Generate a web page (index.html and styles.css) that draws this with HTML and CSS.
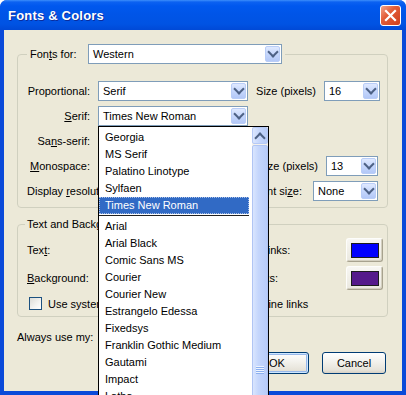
FILE: index.html
```html
<!DOCTYPE html>
<html lang="en">
<head>
    <meta charset="UTF-8">
    <title>Fonts &amp; Colors</title>
    <link rel="stylesheet" href="styles.css">
</head>
<body>
    <div class="window">
        <!-- Title bar -->
        <div class="titlebar">
            <span class="title">Fonts &amp; Colors</span>
            <button class="close-button" aria-label="Close">
                <svg width="19" height="19" viewBox="0 0 19 19"><path d="M5 5L14 14M14 5L5 14" stroke="#fff" stroke-width="2.2" stroke-linecap="square"/></svg>
            </button>
        </div>

        <div class="client">
            <!-- Fonts group -->
            <fieldset class="group group-fonts">
                <legend>
                    <div class="legend-inner">
                        <label class="legend-label">Fon<u>t</u>s for:</label>
                        <div class="combo combo-lang"><span class="combo-value">Western</span><span class="combo-arrow"></span></div>
                    </div>
                </legend>
                <div class="rows">
                    <div class="row">
                        <label class="row-label">Proportional:</label>
                        <div class="combo combo-face"><span class="combo-value">Serif</span><span class="combo-arrow"></span></div>
                        <div class="side">
                            <label>Size (pixels)</label>
                            <div class="combo combo-size"><span class="combo-value">16</span><span class="combo-arrow"></span></div>
                        </div>
                    </div>
                    <div class="row">
                        <label class="row-label"><u>S</u>erif:</label>
                        <div class="combo combo-face"><span class="combo-value">Times New Roman</span><span class="combo-arrow"></span></div>
                    </div>
                    <div class="row">
                        <label class="row-label">Sa<u>n</u>s-serif:</label>
                        <div class="combo combo-face"><span class="combo-value">Arial</span><span class="combo-arrow"></span></div>
                    </div>
                    <div class="row">
                        <label class="row-label"><u>M</u>onospace:</label>
                        <div class="combo combo-face"><span class="combo-value">Courier New</span><span class="combo-arrow"></span></div>
                        <div class="side side-inset">
                            <label>Size (pixels)</label>
                            <div class="combo combo-size-small"><span class="combo-value">13</span><span class="combo-arrow"></span></div>
                        </div>
                    </div>
                    <div class="row">
                        <label class="row-label-free">Display <u>r</u>esolution:</label>
                        <div class="combo combo-dpi"><span class="combo-value">96 dpi</span><span class="combo-arrow"></span></div>
                        <div class="side side-inset side-wide">
                            <label>Minimum font si<u>z</u>e:</label>
                            <div class="combo combo-min"><span class="combo-value">None</span><span class="combo-arrow"></span></div>
                        </div>
                    </div>
                </div>
            </fieldset>

            <!-- Colors group -->
            <fieldset class="group group-colors">
                <legend>Text and Background</legend>
                <div class="color-row">
                    <label class="color-label">Tex<u>t</u>:</label>
                    <label class="color-label-right">Unvisited links:</label>
                    <button class="color-button"><span class="swatch swatch-link"></span></button>
                </div>
                <div class="color-row">
                    <label class="color-label"><u>B</u>ackground:</label>
                    <label class="color-label-right">Visited links:</label>
                    <button class="color-button"><span class="swatch swatch-visited"></span></button>
                </div>
                <div class="check-row">
                    <label class="check check-first"><span class="checkbox"></span>Use system colors</label>
                    <label class="check"><span class="checkbox"></span>Underline links</label>
                </div>
            </fieldset>

            <div class="always-row">
                <span class="always-label">Always use my:</span>
                <label class="check"><span class="checkbox"></span>Fonts</label>
                <label class="check"><span class="checkbox"></span>Colors</label>
            </div>

            <div class="button-row">
                <button class="btn btn-default">OK</button>
                <button class="btn">Cancel</button>
            </div>
        </div>

        <!-- Open drop-down of the Serif combo -->
        <div class="font-list">
            <div class="font-items">
                <div class="font-item">Georgia</div>
                <div class="font-item">MS Serif</div>
                <div class="font-item">Palatino Linotype</div>
                <div class="font-item">Sylfaen</div>
                <div class="font-item selected">Times New Roman</div>
                <div class="font-sep"></div>
                <div class="font-item">Arial</div>
                <div class="font-item">Arial Black</div>
                <div class="font-item">Comic Sans MS</div>
                <div class="font-item">Courier</div>
                <div class="font-item">Courier New</div>
                <div class="font-item">Estrangelo Edessa</div>
                <div class="font-item">Fixedsys</div>
                <div class="font-item">Franklin Gothic Medium</div>
                <div class="font-item">Gautami</div>
                <div class="font-item">Impact</div>
                <div class="font-item">Latha</div>
            </div>
            <div class="scrollbar">
                <div class="scroll-up"></div>
                <div class="scroll-thumb"><div class="scroll-grip"></div></div>
            </div>
        </div>
    </div>
</body>
</html>
```

FILE: styles.css
```css
* {
    box-sizing: border-box;
}

body {
    margin: 0;
    background-color: #ffffff;
    font-family: "Liberation Sans", Arial, sans-serif;
    font-size: 11px;
    color: #000;
}

button {
    font-family: inherit;
    font-size: 11px;
    color: #000;
    padding: 0;
}

label {
    white-space: nowrap;
}

/* Window frame */
.window {
    position: relative;
    width: 406px;
    height: 395px;
    overflow: hidden;
    display: flex;
    flex-direction: column;
    background-color: #0a4ad9;
    border-radius: 7px 7px 0 0;
}

.titlebar {
    height: 30px;
    flex: none;
    display: flex;
    align-items: center;
    justify-content: space-between;
    padding: 0 5px 0 8px;
    background: linear-gradient(to bottom, #3d8ffb 0, #0c62f1 2px, #0058ee 6px, #0055e8 45%, #0053e3 80%, #0049d6 100%);
}

.title {
    color: #fff;
    font-weight: bold;
    font-size: 13px;
    letter-spacing: 0.2px;
    text-shadow: 1px 1px 0 #0b2c9c;
}

.close-button {
    width: 21px;
    height: 21px;
    border: 1px solid #fff;
    border-radius: 3px;
    background: linear-gradient(135deg, #f3a58c 0, #e35d38 40%, #cd3f1d 100%);
    display: flex;
    align-items: center;
    justify-content: center;
}

.client {
    flex: 1;
    margin: 0 4px 4px;
    background-color: #ece9d8;
    padding: 14px 14px 0 13px;
    display: flex;
    flex-direction: column;
}

/* Group boxes */
.group {
    margin: 0;
    min-width: 0;
    border: 1px solid #d0d0bf;
    border-radius: 4px;
    padding: 17px 7px 6px 9px;
}

.group-fonts legend {
    padding: 0 3px;
}

.legend-inner {
    display: flex;
    align-items: center;
}

.legend-label {
    width: 58px;
}

.group-colors {
    margin-top: 10px;
    padding: 7px 4px 6px 9px;
}

.group-colors legend {
    padding: 0 2px;
    margin-left: -2px;
    line-height: 13px;
}

.rows {
    display: flex;
    flex-direction: column;
    gap: 5px;
}

.row {
    display: flex;
    align-items: center;
    height: 20px;
}

.row-label {
    width: 63px;
    margin-right: 8px;
    text-align: right;
    flex: none;
}

.row-label-free {
    margin-right: 8px;
    flex: none;
}

.side {
    margin-left: auto;
    display: flex;
    align-items: center;
    gap: 8px;
    flex: none;
}

.side-inset {
    margin-right: 2px;
}

.side-wide {
    gap: 11px;
}

/* XP style combo boxes */
.combo {
    height: 20px;
    flex: none;
    border: 1px solid #7f9db9;
    background-color: #fff;
    display: flex;
    align-items: center;
}

.combo-value {
    flex: 1;
    padding-left: 4px;
    white-space: nowrap;
    overflow: hidden;
}

.combo-arrow {
    width: 15px;
    height: 16px;
    margin: 1px;
    border: 1px solid #b9cdf7;
    border-radius: 2px;
    background: linear-gradient(to bottom, #dfe9ff 0, #c6d7fc 50%, #b3c8f7 100%);
    display: flex;
    align-items: center;
    justify-content: center;
}

.combo-arrow::after {
    content: "";
    width: 6px;
    height: 6px;
    border-right: 2px solid #4d6185;
    border-bottom: 2px solid #4d6185;
    transform: translateY(-2px) rotate(45deg);
}

.combo-lang { width: 194px; }
.combo-face { width: 150px; }
.combo-size { width: 56px; }
.combo-size-small { width: 52px; }
.combo-dpi { width: 60px; }
.combo-min { width: 65px; }

/* Colors group */
.color-row {
    display: flex;
    align-items: center;
    height: 24px;
    margin-bottom: 4px;
}

.color-label {
    width: 190px;
    flex: none;
}

.color-label-right {
    flex: 1;
}

.color-button {
    width: 37px;
    height: 24px;
    flex: none;
    border: 1px solid;
    border-color: #fdfdfb #a7a28e #a7a28e #fdfdfb;
    border-radius: 3px;
    background: linear-gradient(to bottom, #f8f7f3, #ebe9e0);
    box-shadow: inset -1px -1px 0 #d4d0c0;
    display: flex;
    align-items: center;
    justify-content: center;
}

.swatch {
    width: 28px;
    height: 15px;
    border: 1px solid #1c1c1c;
}

.swatch-link { background-color: #0000ff; }
.swatch-visited { background-color: #551a8b; }

.check-row {
    display: flex;
    align-items: center;
    height: 13px;
    margin-top: 7px;
    padding-left: 2px;
}

.check {
    display: flex;
    align-items: center;
    gap: 6px;
}

.check-first {
    width: 188px;
    flex: none;
}

.checkbox {
    width: 13px;
    height: 13px;
    flex: none;
    border: 1px solid #1c5180;
    background: linear-gradient(135deg, #dcdcd7 0, #f4f4f1 60%, #fff 100%);
}

.always-row {
    display: flex;
    align-items: center;
    height: 13px;
    margin-top: 13px;
    gap: 14px;
}

.always-label {
    margin-right: 6px;
}

/* Dialog buttons */
.button-row {
    display: flex;
    justify-content: flex-end;
    gap: 13px;
    margin-top: 9px;
    padding-right: 2px;
}

.btn {
    width: 64px;
    height: 22px;
    border: 1px solid #003c74;
    border-radius: 3px;
    background: linear-gradient(to bottom, #ffffff 0, #f4f3ee 40%, #e6e3d9 85%, #d6d0c5 100%);
}

.btn-default {
    box-shadow: inset 0 0 0 1px #cee7ff, inset 0 0 0 2px #98b8ea;
}

/* Drop-down list (lies over the dialog) */
.font-list {
    position: absolute;
    left: 98px;
    top: 126px;
    width: 171px;
    height: 300px;
    border: 1px solid #000;
    background-color: #fff;
    display: flex;
}

.font-items {
    flex: 1;
    padding-top: 2px;
}

.font-item {
    height: 17px;
    line-height: 17px;
    padding-left: 6px;
    margin-right: 3px;
    white-space: nowrap;
    overflow: hidden;
}

.font-item.selected {
    background-color: #316ac5;
    color: #fff;
    outline: 1px dotted #a9bfe6;
    outline-offset: -1px;
}

.font-sep {
    height: 4px;
    margin-right: 3px;
    background: linear-gradient(to bottom, transparent 1px, #222 1px, #222 2px, transparent 2px);
}

.scrollbar {
    width: 16px;
    display: flex;
    flex-direction: column;
    background-color: #f3f1ec;
}

.scroll-up {
    height: 17px;
    border: 1px solid #b5c9f6;
    border-radius: 2px;
    background: linear-gradient(to right, #dbe6fe, #c3d5fc 50%, #b6cbf8);
    display: flex;
    align-items: center;
    justify-content: center;
}

.scroll-up::after {
    content: "";
    width: 6px;
    height: 6px;
    border-left: 2px solid #4d6185;
    border-top: 2px solid #4d6185;
    transform: translateY(2px) rotate(45deg);
}

.scroll-thumb {
    flex: 1;
    margin-top: 1px;
    border: 1px solid #b0c5f4;
    border-radius: 2px;
    background: linear-gradient(to right, #d9e5fe, #c4d6fc 40%, #b8ccf9);
    display: flex;
    justify-content: center;
}

.scroll-grip {
    width: 8px;
    height: 8px;
    margin-top: 220px;
    background: repeating-linear-gradient(to bottom, #eef4fe 0, #eef4fe 1px, #8cb0f0 1px, #8cb0f0 2px);
}
```
